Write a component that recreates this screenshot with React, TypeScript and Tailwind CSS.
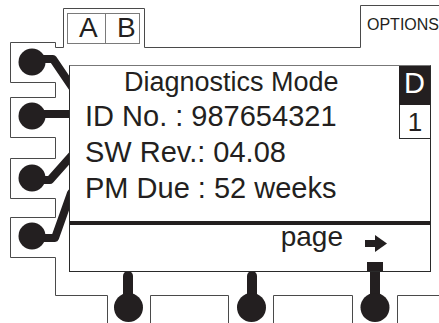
export default function App() {
  const ink = "#231f20";
  return (
    <div className="relative w-[439px] h-[323px] overflow-hidden bg-white font-['Liberation_Sans',Arial,sans-serif] text-[#231f20]">
      <svg className="absolute inset-0" width="439" height="323" viewBox="0 0 439 323">
        <g fill="none" stroke="#4a4a4a" strokeWidth="1" strokeLinejoin="round">
          <path d="M107.5 323V295.5H55.5V257.5H10.5V217.5H55.5V198.5H10.5V158.5H55.5V137.5H10.5V97.5H55.5V82.5H10.5V42.5H55.5V47.5H63.5V8.5H144.5V47.5H360.5V5.5H439" />
          <path d="M150.5 323V295.5H228.5V323" />
          <path d="M273.5 323V295.5H352.5V323" />
          <path d="M397.5 323V295.5H439" />
        </g>
        <g fill="none" stroke={ink} strokeWidth="8" strokeLinecap="round" strokeLinejoin="round">
          <path d="M32 59H53L74 90" />
          <path d="M32 114H76" />
          <path d="M32 180H50L74 153" />
          <path d="M32 238H55L71 193" />
          <path d="M128 276V307" strokeWidth="10" />
          <path d="M252 276V307" strokeWidth="10" />
          <path d="M375 268V307" strokeWidth="10" strokeLinecap="butt" />
        </g>
        <g fill={ink}>
          <circle cx="32" cy="62" r="13.5" />
          <circle cx="32" cy="116" r="13.5" />
          <circle cx="32" cy="178" r="13.5" />
          <circle cx="32" cy="236" r="13.5" />
          <circle cx="128.5" cy="307.5" r="14.5" />
          <circle cx="251.5" cy="307.5" r="14.5" />
          <circle cx="375" cy="307.5" r="14.5" />
        </g>
      </svg>

      {/* A | B tab */}
      <div className="absolute left-[67px] top-[13px] w-[73px] h-[31px] border border-[#7a7a7a] flex text-[28px] leading-[27px]">
        <div className="w-[38px] border-r border-[#7a7a7a] pl-[11px]">A</div>
        <div className="flex-1 pl-[11px]">B</div>
      </div>

      {/* OPTIONS tab label */}
      <div className="absolute left-[367px] top-[17px] text-[16px] leading-[16px] whitespace-nowrap">OPTIONS</div>

      {/* Screen */}
      <div className="absolute left-[69px] top-[65px] w-[362px] h-[207px] border border-[#2a2a2a] border-t-[#777] bg-white flex flex-col">
        <div className="flex h-[155px]">
          <div className="flex-1 flex flex-col">
            <div className="pl-[54px] text-[27px] leading-[32px]">Diagnostics Mode</div>
            <div className="pl-[15px] text-[29px] leading-[36px]">ID No. : 987654321</div>
            <div className="pl-[15px] text-[29px] leading-[36px]">SW Rev.: 04.08</div>
            <div className="pl-[15px] text-[29px] leading-[36px]">PM Due : 52 weeks</div>
          </div>
          <div className="w-[31px] flex flex-col">
            <div className="h-[39px] bg-[#231f20] text-white text-[29px] leading-[35px] text-center">D</div>
            <div className="h-[34px] border-l border-b border-[#2a2a2a] text-[26px] leading-[31px] pt-[2px] text-center">1</div>
          </div>
        </div>
        <div className="h-[4px] bg-[#231f20]" />
        <div className="flex-1 flex justify-end items-start pr-[43px]">
          <span className="text-[28px] leading-[24px]">page</span>
          <svg className="ml-[22px] mt-[10px]" width="22" height="17" viewBox="0 0 22 17">
            <rect x="0" y="5" width="12" height="7" fill={ink} />
            <path d="M10 0L22 8.5L10 17Z" fill={ink} />
          </svg>
        </div>
        <div className="absolute left-[297px] top-[196px] w-[16px] h-[9px] bg-[#231f20]" />
      </div>
    </div>
  );
}
